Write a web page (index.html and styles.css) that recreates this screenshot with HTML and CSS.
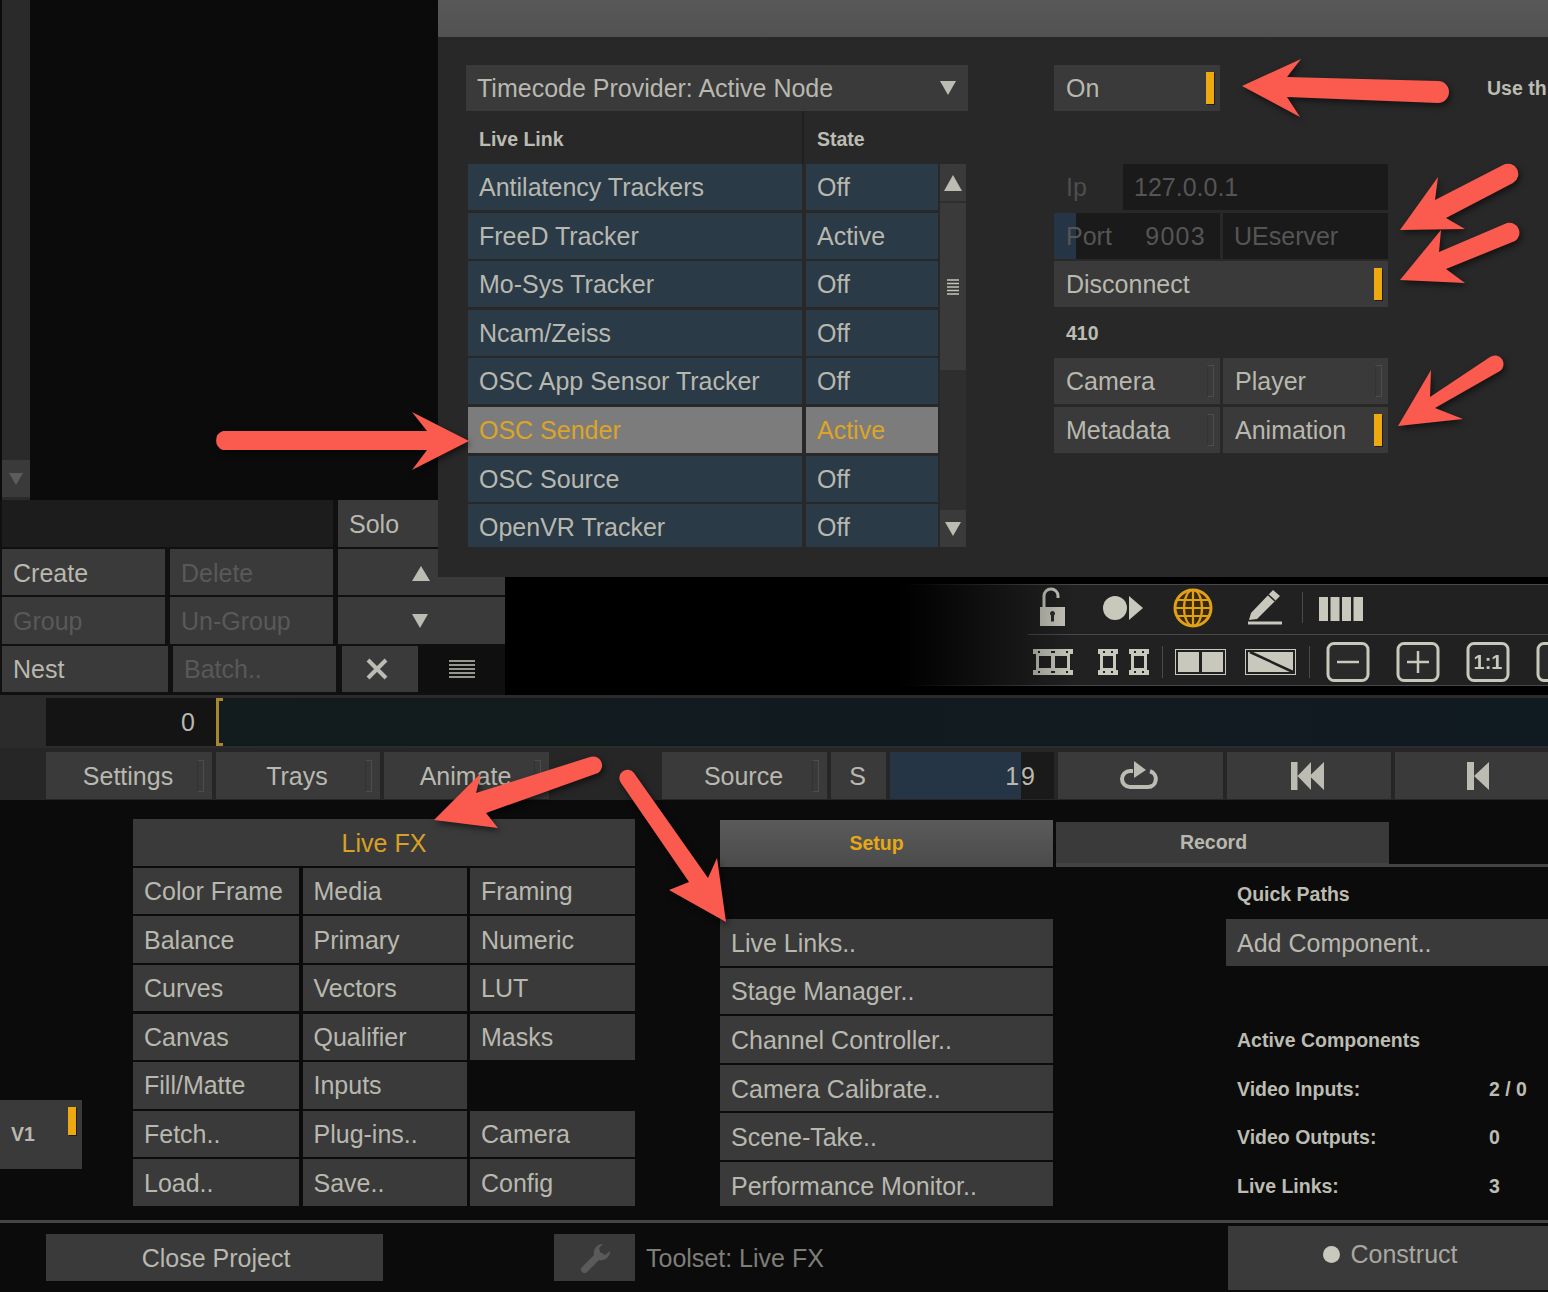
FILE: index.html
```html
<!DOCTYPE html>
<html lang="en">
<head>
<meta charset="utf-8">
<title>Live FX</title>
<link rel="stylesheet" href="styles.css">
</head>
<body>
<div class="app">
  <section class="top">
    <div class="upper">
      <div class="strip">
        <div class="strip-btn"><svg width="14" height="12" viewBox="0 0 14 12"><path class="tri-dim" d="M0 0h14L7 12z"/></svg></div>
      </div>
    </div>
    <div class="lower">
      <div class="panel">
        <div class="prow">
          <div class="btn blank w331"></div>
          <div class="btn w100">Solo</div>
        </div>
        <div class="prow r2">
          <div class="btn w163">Create</div>
          <div class="btn w163 dim">Delete</div>
          <div class="btn w167 tri-btn"><svg width="18" height="15" viewBox="0 0 18 15"><path class="tri" d="M9 0l9 15H0z"/></svg></div>
        </div>
        <div class="prow">
          <div class="btn w163 dim">Group</div>
          <div class="btn w163 dim">Un-Group</div>
          <div class="btn w167 tri-btn"><svg width="16" height="14" viewBox="0 0 16 14"><path class="tri" d="M0 0h16L8 14z"/></svg></div>
        </div>
        <div class="prow">
          <div class="btn w166">Nest</div>
          <div class="btn w163 dim">Batch..</div>
          <div class="btn w81 center"><svg width="22" height="22" viewBox="0 0 22 22"><path class="xmark" d="M2 2l18 18M20 2L2 20"/></svg></div>
          <div class="listbtn"><svg width="26" height="18" viewBox="0 0 26 18"><path class="lines" d="M0 1h26M0 5h26M0 9h26M0 13h26M0 17h26"/></svg></div>
        </div>
      </div>
      <div class="viewtools">
        <div class="toolbar">
          <svg class="tool-svg r1" width="520" height="50" viewBox="1028 585 520 50">
            <path class="rule" d="M1028 634.500H1548"/>
            <g class="ico">
              <path class="shackle" d="M1044 607v-11a7 7 0 0 1 14 0v2"/>
              <rect x="1040" y="607" width="25" height="19"/>
              <path class="hole" d="M1052.500 611a2.500 2.500 0 0 1 1.500 4.500v6h-3v-6a2.500 2.500 0 0 1 1.500-4.500z"/>
              <circle cx="1115" cy="608" r="12"/>
              <path d="M1129 596l14 12-14 12z"/>
              <path d="M1249 620l2-7 22-23 7 6-23 23zM1248 621.500h34v3h-34z"/>
              <path class="pen-gap" d="M1268 594.500l7 6.500"/>
              <path class="sep" d="M1302.500 592v31"/>
              <path d="M1319 597h9v24h-9zM1330.500 597h9v24h-9zM1342 597h9v24h-9zM1353.500 597h9.500v24h-9.500z"/>
            </g>
            <g class="globe">
              <circle cx="1193" cy="608" r="18"/>
              <ellipse cx="1193" cy="608" rx="9" ry="18"/>
              <path d="M1193 590v36M1177 600h32M1175 608h36M1177 616h32"/>
            </g>
          </svg>
          <svg class="tool-svg" width="520" height="50" viewBox="1028 635 520 50">
            <g class="ico">
              <path d="M1033 649h40v5h-3v16h3v5h-40v-5h3v-16h-3z"/>
              <path d="M1098 649h20v5h-2v16h2v5h-20v-5h2v-16h-2z"/>
              <path d="M1129 649h20v5h-2v16h2v5h-20v-5h2v-16h-2z"/>
            </g>
            <g class="cut">
              <path d="M1039 656h12v12h-12zM1055 656h12v12h-12zM1103 656h10v12h-10zM1134 656h10v12h-10z"/>
              <path d="M1038 651h2v2h-2zM1051 651h4v2h-4zM1066 651h2v2h-2zM1038 671h2v2h-2zM1051 671h4v2h-4zM1066 671h2v2h-2z"/>
              <path d="M1103 651h2v2h-2zM1111 651h2v2h-2zM1103 671h2v2h-2zM1111 671h2v2h-2zM1134 651h2v2h-2zM1142 651h2v2h-2zM1134 671h2v2h-2zM1142 671h2v2h-2z"/>
            </g>
            <g class="outline">
              <path class="sep" d="M1162.500 646v32M1309.500 646v32"/>
              <rect x="1175.500" y="649.500" width="50" height="25"/>
              <rect x="1245.500" y="649.500" width="50" height="25"/>
            </g>
            <g class="ico">
              <path d="M1178 652h21v20h-21zM1202 652h21v20h-21zM1248 652h45v20h-45z"/>
              <path class="slash" d="M1250 652l43 20"/>
            </g>
            <g class="round">
              <rect x="1328" y="643.500" width="40" height="37" rx="6"/>
              <rect x="1398" y="643.500" width="40" height="37" rx="6"/>
              <rect x="1468" y="643.500" width="40" height="37" rx="6"/>
              <rect x="1538" y="643.500" width="40" height="37" rx="6"/>
              <path class="thin" d="M1337 662h22M1407 662h22M1418 651v22"/>
            </g>
            <text class="ratio" x="1488" y="669" text-anchor="middle">1:1</text>
          </svg>
        </div>
      </div>
    </div>
  </section>

  <section class="timeline">
    <div class="tl-side"></div>
    <div class="tl-num">0</div>
    <div class="tl-bracket"></div>
    <div class="tl-track"></div>
  </section>

  <section class="transport">
    <div class="btn tb w166 c">Settings<i class="tick"></i></div>
    <div class="btn tb w164 c">Trays<i class="tick"></i></div>
    <div class="btn tb w165 c">Animate<i class="tick"></i></div>
    <div class="tb-gap"></div>
    <div class="btn tb w165 c">Source<i class="tick"></i></div>
    <div class="btn tb w55 c">S</div>
    <div class="frame"><span class="frame-num">19</span></div>
    <div class="btn tb w165 c"><svg width="40" height="30" viewBox="0 0 40 30"><path class="loop" d="M13 10H10a8 8 0 0 0 0 16H28a8 8 0 0 0 2-15.700"/><path class="tri" d="M14 0l12 9-12 8z"/></svg></div>
    <div class="btn tb w164 c"><svg width="34" height="28" viewBox="0 0 34 28"><path class="tri" d="M0 0h6.500v28H0zM6.500 14L20 0v28zM18.500 14L33 0v28z"/></svg></div>
    <div class="btn tb grow c"><svg class="k" width="22" height="28" viewBox="0 0 22 28"><path class="tri" d="M0 0h7v28H0zM7 14L22 0v28z"/></svg></div>
  </section>

  <section class="work">
    <div class="v1col">
      <div class="v1">V1<i class="tick on v1tick"></i></div>
    </div>
    <div class="fx">
      <div class="btn fxhead c gold">Live FX</div>
      <div class="fxgrid">
        <div class="btn">Color Frame</div><div class="btn">Media</div><div class="btn">Framing</div>
        <div class="btn">Balance</div><div class="btn">Primary</div><div class="btn">Numeric</div>
        <div class="btn">Curves</div><div class="btn">Vectors</div><div class="btn">LUT</div>
        <div class="btn">Canvas</div><div class="btn">Qualifier</div><div class="btn">Masks</div>
        <div class="btn">Fill/Matte</div><div class="btn">Inputs</div><div></div>
        <div class="btn">Fetch..</div><div class="btn">Plug-ins..</div><div class="btn">Camera</div>
        <div class="btn">Load..</div><div class="btn">Save..</div><div class="btn">Config</div>
      </div>
    </div>
    <div class="setup">
      <div class="tabs">
        <div class="tab active">Setup</div>
        <div class="tab rec">Record</div>
        <div class="tab-rest"></div>
      </div>
      <div class="setup-body">
        <div class="slist">
          <div></div>
          <div class="btn">Live Links..</div>
          <div class="btn">Stage Manager..</div>
          <div class="btn">Channel Controller..</div>
          <div class="btn">Camera Calibrate..</div>
          <div class="btn">Scene-Take..</div>
          <div class="btn last">Performance Monitor..</div>
        </div>
        <div class="side">
          <div class="lbl">Quick Paths</div>
          <div class="btn add">Add Component..</div>
          <div></div>
          <div class="lbl">Active Components</div>
          <div class="lbl stat"><span>Video Inputs:</span><span class="val">2 / 0</span></div>
          <div class="lbl stat"><span>Video Outputs:</span><span class="val">0</span></div>
          <div class="lbl stat"><span>Live Links:</span><span class="val">3</span></div>
        </div>
      </div>
    </div>
  </section>

  <footer class="foot">
    <div class="btn closep c">Close Project</div>
    <div class="btn wrench c"><svg width="32" height="30" viewBox="0 0 32 30"><path class="wr" d="M24 1A9 9 0 0 0 15 12L3 24A3.500 3.500 0 0 0 8 29L20 17A9 9 0 0 0 31 8L26 12 21 9 20 5z"/></svg></div>
    <div class="toolset">Toolset: Live FX</div>
    <div class="btn construct c"><i class="dot"></i>Construct</div>
  </footer>

  <div class="dialog">
    <div class="dlg-bar"></div>
    <div class="dlg-body">
      <div class="dlg-left">
        <div class="btn drop">Timecode Provider: Active Node<svg width="16" height="14" viewBox="0 0 16 14"><path class="tri" d="M0 0h16L8 14z"/></svg></div>
        <div class="thead">
          <div class="lbl th1">Live Link</div>
          <div class="lbl th2">State</div>
        </div>
        <div class="tablewrap">
          <div class="tbl">
            <div class="cell">Antilatency Trackers</div><div class="cell">Off</div>
            <div class="cell">FreeD Tracker</div><div class="cell">Active</div>
            <div class="cell">Mo-Sys Tracker</div><div class="cell">Off</div>
            <div class="cell">Ncam/Zeiss</div><div class="cell">Off</div>
            <div class="cell">OSC App Sensor Tracker</div><div class="cell">Off</div>
            <div class="cell sel">OSC Sender</div><div class="cell sel">Active</div>
            <div class="cell">OSC Source</div><div class="cell">Off</div>
            <div class="cell cut-row">OpenVR Tracker</div><div class="cell cut-row">Off</div>
          </div>
          <div class="sbar">
            <div class="sb-btn"><svg width="18" height="16" viewBox="0 0 18 16"><path class="tri" d="M9 0l9 16H0z"/></svg></div>
            <div class="sb-thumb"><svg width="12" height="16" viewBox="0 0 12 16"><path class="grip" d="M0 1h12M0 4.500h12M0 8h12M0 11.500h12M0 15h12"/></svg></div>
            <div class="sb-track"></div>
            <div class="sb-btn down"><svg width="16" height="14" viewBox="0 0 16 14"><path class="tri" d="M0 0h16L8 14z"/></svg></div>
          </div>
        </div>
      </div>
      <div class="dlg-right">
        <div class="btn onbtn">On<i class="tick on"></i></div>
        <div class="rgrid">
          <div class="iprow"><span class="dimtxt iplabel">Ip</span><div class="field ipf">127.0.0.1</div></div>
          <div class="portrow">
            <div class="port"><span>Port</span><span class="portnum">9003</span></div>
            <div class="field uef">UEserver</div>
          </div>
          <div class="btn disc">Disconnect<i class="tick on"></i></div>
          <div class="lbl num">410</div>
          <div class="pair">
            <div class="btn">Camera<i class="tick"></i></div>
            <div class="btn">Player<i class="tick"></i></div>
          </div>
          <div class="pair">
            <div class="btn">Metadata<i class="tick"></i></div>
            <div class="btn">Animation<i class="tick on"></i></div>
          </div>
        </div>
      </div>
      <div class="lbl usetxt">Use th</div>
    </div>
  </div>

  <svg class="arrows" width="1548" height="1292" viewBox="0 0 1548 1292">
    <path d="M1242 86L1301 59 1287 77 1438 81A11 11 0 0 1 1438 103L1287 97 1300 117z"/>
    <path d="M1400 230L1438 177 1435 200 1503 165A10 10 0 0 1 1513 183L1446 218 1465 229z"/>
    <path d="M1400 280L1441 230 1439 252 1507 223A10 10 0 0 1 1515 241L1446 269 1465 283z"/>
    <path d="M1398 426L1431 370 1430 397 1490 357A8 8 0 0 1 1500 371L1435 408 1463 419z"/>
    <path d="M469 441L412 412 427 431 223 431A10 10 0 0 0 223 450L427 450 412 470z"/>
    <path d="M434 820L481 773 476 793 590 757A9 9 0 0 1 598 773L486 813 498 828z"/>
    <path d="M726 922L669 890 689 882 621 783A8 8 0 0 1 634 773L708 878 717 858z"/>
  </svg>
</div>
</body>
</html>
```

FILE: styles.css
```css
* { box-sizing: border-box; }
html, body { margin: 0; padding: 0; background: #0b0b0b; }
body { font-family: "Liberation Sans", Arial, sans-serif; color: #b8b8af; font-size: 25px; }
i { display: block; font-style: normal; }

.app { position: relative; width: 1548px; height: 1292px; overflow: hidden; background: #0b0b0b; }

.btn { display: flex; align-items: center; min-width: 0; padding: 1px 0 0 11px; background: #3a3a3a; color: #b8b8af; white-space: nowrap; position: relative; }
.c { justify-content: center; padding-left: 0; }
.dim { color: #595959; }
.gold { color: #d9a026; }
.tri { fill: #bcbcb2; }
.tri-dim { fill: #5c5c5c; }

/* ticks */
.tick { position: absolute; right: 6px; top: 50%; width: 7px; height: 32px; margin-top: -16px; border: 1px solid #4d4d4d; border-left-color: #333; }
.tick.on { width: 8px; background: #eea911; border: 0; box-shadow: 1px 1px 0 #1d1d1d; }

/* top */
.top { height: 695px; }
.upper { height: 500px; }
.strip { width: 28px; height: 500px; margin-left: 2px; background: #2a2a2a; padding-top: 460px; }
.strip-btn { width: 28px; height: 37px; background: #3a3a3a; display: flex; align-items: center; justify-content: center; }

.lower { display: flex; height: 195px; background: #000; }
.panel { width: 505px; padding-left: 2px; background: #101010; display: grid; grid-template-rows: 47px 46px 47px 46px; row-gap: 2px; align-content: start; }
.prow { display: flex; gap: 5px; }
.r2 .btn { padding-top: 2px; }
.w331 { width: 331px; background: #1c1c1c; }
.w100 { width: 100px; }
.w163 { width: 163px; }
.w166 { width: 166px; }
.w167 { width: 167px; }
.w81 { width: 76px; margin-left: 1px; }
.center { justify-content: center; padding: 0 6px 0 0; }
.tri-btn { justify-content: flex-start; padding-left: 74px; }
.xmark { stroke: #bcbcb2; stroke-width: 4; fill: none; }
.listbtn { flex: 1; margin-left: -5px; display: flex; align-items: center; justify-content: center; background: #0f0f0f; }
.lines { stroke: #c4c4ba; stroke-width: 1.600; fill: none; }

.viewtools { flex: 1; padding-top: 84px; }
.toolbar { height: 102px; background: #212121; border-top: 1px solid #484848; border-bottom: 1px solid #484848; -webkit-mask-image: linear-gradient(90deg, transparent 395px, #000 570px); mask-image: linear-gradient(90deg, transparent 395px, #000 570px); }
.tool-svg { display: block; margin-left: 523px; }
.rule { stroke: #4a4a4a; stroke-width: 1; fill: none; }
.ico { fill: #c8c8bc; }
.shackle { fill: none; stroke: #c8c8bc; stroke-width: 3; }
.hole { fill: #2b2b2b; }
.pen-gap { stroke: #212121; stroke-width: 1.500; fill: none; }
.sep { stroke: #4a4a4a; stroke-width: 1; fill: none; }
.globe circle, .globe ellipse, .globe path { fill: none; stroke: #e0a018; stroke-width: 2.200; }
.globe circle { fill: #3a2a08; stroke-width: 3; }
.cut { fill: #212121; }
.outline { fill: none; stroke: #c8c8bc; stroke-width: 2; }
.outline rect { stroke-width: 1; }
.outline .sep { stroke: #4a4a4a; stroke-width: 1; }
.slash { stroke: #212121; stroke-width: 2.500; fill: none; }
.round rect { fill: #2a2a2a; stroke: #c8c8bc; stroke-width: 3; }
.thin { fill: none; stroke: #c8c8bc; stroke-width: 2.500; }
.ratio { fill: #c8c8bc; font-size: 20px; font-weight: 700; }

/* timeline */
.timeline { display: flex; height: 53px; padding: 3px 0 2px; background: #2b2b2b; }
.tl-side { width: 46px; }
.tl-num { width: 170px; display: flex; align-items: center; justify-content: flex-end; padding-right: 21px; background: #141414; }
.tl-bracket { width: 7px; background: #121b1e; border: 3px solid #a8862e; border-right: 0; }
.tl-track { flex: 1; background: linear-gradient(90deg, #121b1d, #101a21); }

/* transport */
.transport { display: flex; height: 52px; padding: 4px 0 1px 46px; gap: 4px; background: #262626; }
.tb { height: 47px; flex: none; padding-right: 2px; }
.tb.w166 { width: 166px; }
.tb .tick { right: 8px; }
.w164 { width: 164px; }
.w165 { width: 165px; }
.w55 { width: 55px; }
.tb.grow { flex: 1; }
.tb-gap { width: 105px; }
.frame { width: 164px; height: 47px; display: flex; align-items: center; justify-content: flex-end; padding: 1px 17px 0 0; background: linear-gradient(90deg, #263545 131px, #1a1a1a 131px); letter-spacing: 2px; }
.loop { fill: none; stroke: #bcbcb2; stroke-width: 4; }
.k { margin-left: 14px; }

/* work */
.work { display: flex; height: 420px; }
.v1col { width: 133px; padding-top: 300px; }
.v1 { position: relative; width: 82px; height: 69px; display: flex; align-items: center; padding-left: 11px; background: #3a3a3a; font-size: 19.500px; font-weight: 700; }
.v1tick { top: 7px; right: 6px; margin-top: 0; height: 28px; }
.fx { width: 502px; padding-top: 19px; }
.fxhead { height: 47px; margin-bottom: 1.800px; }
.fxgrid { display: grid; grid-template-columns: 166px 164px 165px; column-gap: 3.500px; grid-auto-rows: 46.500px; row-gap: 2.100px; }

.setup { width: 828px; margin-left: 85px; padding-top: 20px; }
.tabs { display: flex; height: 47px; }
.tab { display: flex; align-items: center; justify-content: center; font-size: 19.500px; font-weight: 700; }
.active { width: 333px; padding-right: 20px; background: linear-gradient(180deg, #5a5a5a, #4b4b4b); color: #e8a814; }
.rec { width: 333px; height: 41px; margin: 2px 0 0 3px; padding-right: 18px; background: #3a3a3a; box-shadow: 0 4px 0 #444; }
.tab-rest { flex: 1; border-bottom: 3px solid #444; }
.setup-body { display: flex; padding-top: 3.500px; }
.slist, .side { display: grid; grid-template-rows: repeat(6, 46.500px) 43.500px; row-gap: 2.100px; }
.slist { width: 333px; }
.slist .btn { padding-top: 2px; }
.side { width: 322px; margin-left: 173px; grid-template-rows: repeat(7, 46.500px); }
.slist .last { padding-top: 5px; }
.lbl { display: flex; align-items: center; font-size: 19.500px; font-weight: 700; color: #bcbcb2; white-space: nowrap; }
.side .lbl { padding: 2px 0 0 11px; }
.add { padding-top: 2px; }
.stat span:first-child { width: 252px; }

/* footer */
.foot { display: flex; height: 72px; border-top: 3px solid #464646; }
.closep { width: 337px; height: 47px; margin: 11px 0 0 46px; padding-left: 3px; }
.wrench { width: 81px; height: 47px; margin: 11px 0 0 171px; }
.wr { fill: #5a5a5a; }
.toolset { margin: 11px 0 0 11px; height: 47px; display: flex; align-items: center; padding-top: 1px; color: #7e7e78; }
.construct { width: 320px; height: 64px; margin: 3px 0 0 auto; padding: 0 0 8px 4px; color: #a8a8a0; }
.dot { width: 17px; height: 17px; border-radius: 50%; background: #c8c8bc; margin-right: 11px; }

/* dialog */
.dialog { position: absolute; left: 438px; top: 0; width: 1110px; height: 577px; background: #282828; }
.dlg-bar { height: 37px; background: linear-gradient(180deg, #585858, #525252); }
.dlg-body { display: flex; padding: 28px 0 0 28px; }
.dlg-left { width: 503px; }
.drop { height: 46px; width: 502px; padding-top: 0; justify-content: space-between; padding-right: 12px; }
.thead { display: flex; height: 53px; margin-left: 2px; }
.th1 { width: 336px; padding: 4px 0 0 11px; border-right: 2px solid #1f1f1f; }
.th2 { padding: 4px 0 0 13px; }
.tablewrap { display: flex; margin-left: 2px; height: 383px; }
.tbl { display: grid; grid-template-columns: 334px 132px; column-gap: 4px; grid-template-rows: repeat(7, 46px) 43px; row-gap: 2.600px; width: 470px; }
.cell { display: flex; align-items: center; padding: 1px 0 0 11px; background: #2a3a47; color: #b8b8af; }
.cut-row { padding-top: 3px; }
.sel { background: #7c7c7c; color: #dca428; }
.sbar { width: 26px; margin-left: 2px; display: flex; flex-direction: column; background: #2e2e2e; height: 383px; }
.sb-btn { height: 37px; background: #3a3a3a; display: flex; justify-content: center; align-items: center; }
.sb-btn.down { margin-top: auto; }
.sb-thumb { height: 167px; margin-top: 2px; background: #3a3a3a; display: flex; justify-content: center; align-items: center; }
.sb-track { flex: 1; }
.grip { stroke: #c4c4ba; stroke-width: 1.300; fill: none; }
.dlg-right { width: 334px; margin-left: 85px; }
.dlg-right .btn { padding-left: 12px; }
.onbtn { width: 166px; height: 46px; padding-top: 0; }
.rgrid { display: grid; grid-template-rows: repeat(6, 46px); row-gap: 2.600px; margin-top: 53px; }
.iprow { display: flex; }
.iplabel { display: flex; align-items: center; width: 69px; padding: 1px 0 0 12px; }
.dimtxt { color: #4e4e4e; }
.field { background: #1a1a1a; color: #555; display: flex; align-items: center; padding: 1px 0 0 11px; }
.ipf { flex: 1; }
.portrow { display: flex; gap: 3px; }
.port { width: 166px; display: flex; align-items: center; justify-content: space-between; padding: 1px 14px 0 12px; color: #555; background: linear-gradient(90deg, #263545 22px, #1a1a1a 22px); }
.portnum { letter-spacing: 1.300px; }
.uef { flex: 1; }
.num { padding: 2px 0 0 12px; }
.pair { display: grid; grid-template-columns: 166px 165px; column-gap: 3px; }
.usetxt { position: absolute; left: 1049px; top: 78px; height: 20px; color: #bcbcb2; }

.arrows { position: absolute; left: 0; top: 0; fill: #fb5a4e; filter: drop-shadow(2px 3px 3px rgba(0,0,0,.55)); pointer-events: none; }
```
